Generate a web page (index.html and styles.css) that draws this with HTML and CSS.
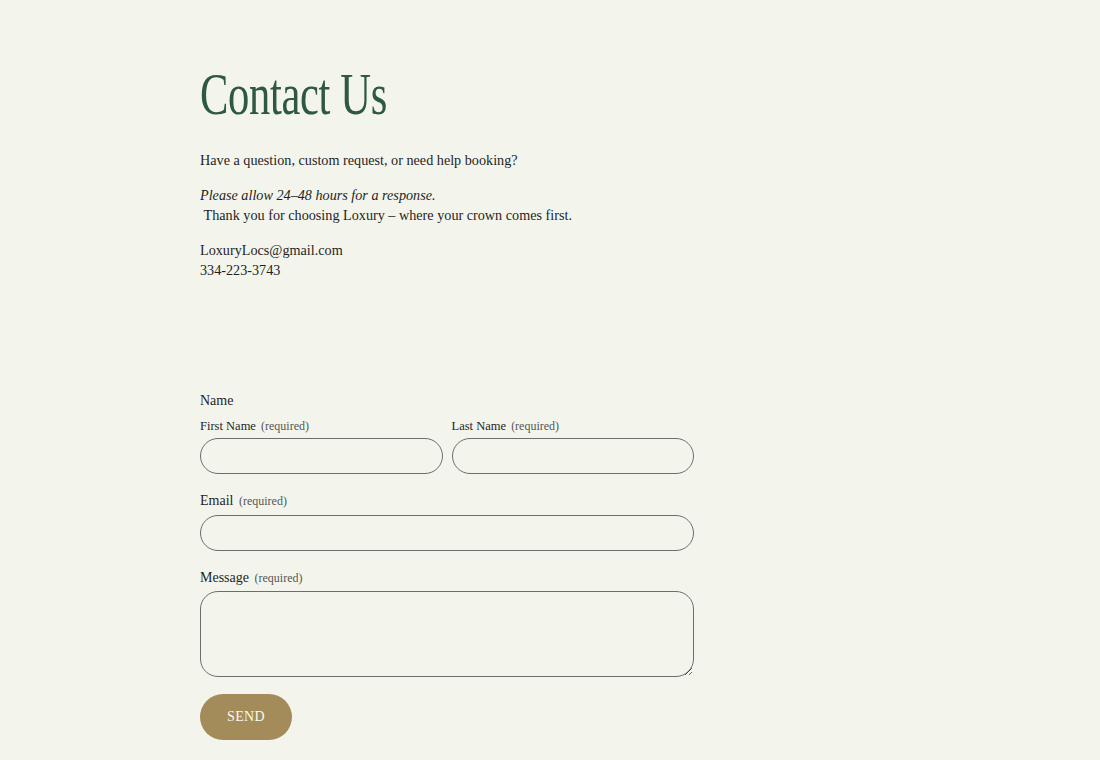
FILE: index.html
```html
<!DOCTYPE html>
<html>
<head>
<meta charset="utf-8">
<link rel="stylesheet" href="styles.css">
</head>
<body>
<main class="page">
  <h1 class="title"><span class="title-text">Contact Us</span></h1>
  <div class="intro">
    <p>Have a question, custom request, or need help booking?</p>
    <p><em>Please allow 24–48 hours for a response.</em><br>&nbsp;Thank you for choosing Loxury – where your crown comes first.</p>
    <p>LoxuryLocs@gmail.com<br>334-223-3743</p>
  </div>
  <form class="form">
    <div class="legend">Name</div>
    <div class="name-row">
      <label class="field">
        <span class="sublabel">First Name <span class="req">(required)</span></span>
        <input class="input" type="text">
      </label>
      <label class="field">
        <span class="sublabel">Last Name <span class="req">(required)</span></span>
        <input class="input" type="text">
      </label>
    </div>
    <label class="field">
      <span class="label">Email <span class="req">(required)</span></span>
      <input class="input" type="email">
    </label>
    <label class="field field-message">
      <span class="label label-message">Message <span class="req">(required)</span></span>
      <textarea class="textarea"></textarea>
    </label>
    <div><button class="send" type="button">SEND</button></div>
  </form>
</main>
</body>
</html>
```
FILE: styles.css
```css
html, body {
  margin: 0;
  padding: 0;
  background: #f3f5ec;
}
body {
  font-family: "Liberation Serif", "Times New Roman", serif;
  color: #1f1f1f;
}
.page {
  width: 494px;
  margin-left: 200px;
  padding-top: 58px;
}
.title {
  margin: 0;
  font-weight: 400;
  font-size: 60px;
  line-height: 72px;
  color: #2e5940;
  white-space: nowrap;
}
.title-text {
  display: inline-block;
  transform: scaleX(0.71);
  transform-origin: left center;
  letter-spacing: -0.5px;
}
.intro {
  margin-top: 20px;
  font-size: 14.2px;
  line-height: 20px;
}
.intro p {
  margin: 0 0 15px 0;
}
.form {
  margin-top: 111px;
  display: flex;
  flex-direction: column;
  font-size: 14px;
}
.legend {
  line-height: 20px;
  margin-bottom: 7px;
}
.name-row {
  display: flex;
  gap: 9px;
  margin-bottom: 18px;
}
.name-row .field {
  flex: 1;
}
.field {
  display: flex;
  flex-direction: column;
}
.form > .field {
  margin-bottom: 18px;
}
.form > .field-message {
  margin-bottom: 17px;
}
.sublabel {
  font-size: 12.5px;
  line-height: 16px;
  margin-bottom: 4px;
}
.label {
  font-size: 14px;
  line-height: 18px;
  margin-bottom: 5px;
}
.label-message {
  margin-bottom: 4px;
}
.req {
  color: #555;
  font-size: 12px;
  margin-left: 2px;
}
.input, .textarea {
  box-sizing: border-box;
  width: 100%;
  border: 1px solid #6d6d6a;
  background: transparent;
  font-family: inherit;
  font-size: 13px;
  padding: 0 14px;
  margin: 0;
  outline: none;
}
.input {
  height: 36px;
  border-radius: 18px;
}
.textarea {
  height: 86px;
  border-radius: 18px;
  resize: vertical;
  padding: 10px 14px;
  display: block;
}
.send {
  width: 92px;
  height: 46px;
  border: none;
  border-radius: 23px;
  background: #a38b5a;
  color: #fbf8ef;
  font-family: inherit;
  font-size: 14px;
  letter-spacing: 0.3px;
  cursor: pointer;
}
```
